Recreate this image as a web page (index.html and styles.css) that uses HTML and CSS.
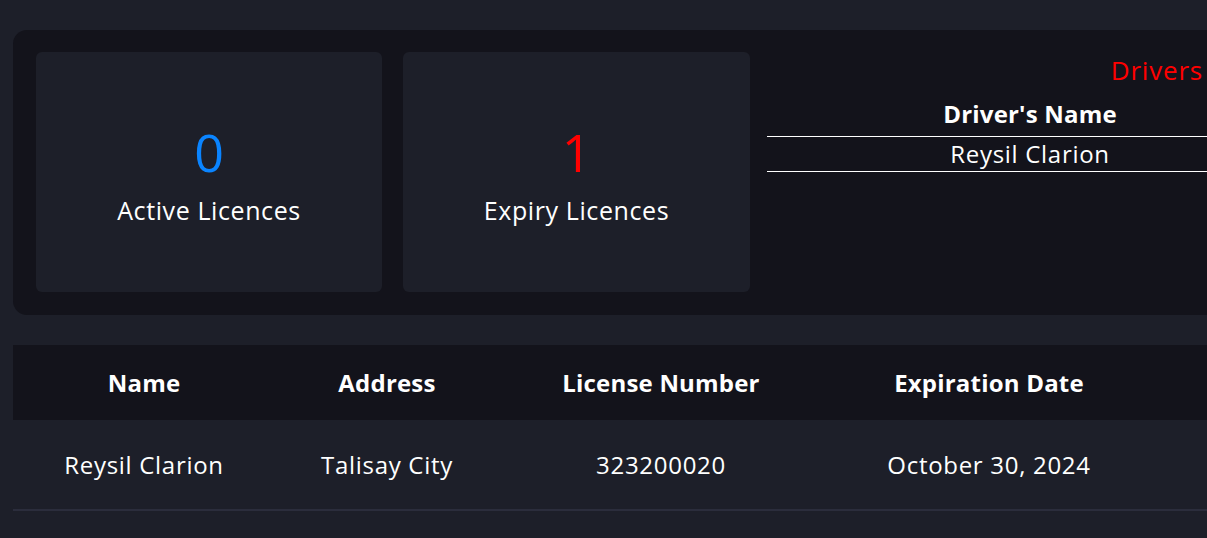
FILE: index.html
```html
<!DOCTYPE html>
<html lang="en">
<head>
<meta charset="utf-8">
<title>Licences Dashboard</title>
<link rel="stylesheet" href="styles.css">
</head>
<body>
<main class="page">
  <section class="summary">
    <div class="stat-card">
      <div class="stat-value blue">0</div>
      <div class="stat-label">Active Licences</div>
    </div>
    <div class="stat-card second">
      <div class="stat-value red">1</div>
      <div class="stat-label">Expiry Licences</div>
    </div>
    <div class="drivers">
      <h2 class="drivers-title">Drivers</h2>
      <table class="drivers-table">
        <thead><tr><th>Driver's Name</th></tr></thead>
        <tbody><tr><td>Reysil Clarion</td></tr></tbody>
      </table>
    </div>
  </section>

  <table class="licences">
    <thead>
      <tr>
        <th class="c1">Name</th>
        <th class="c2">Address</th>
        <th class="c3">License Number</th>
        <th class="c4">Expiration Date</th>
        <th class="c5"></th>
      </tr>
    </thead>
    <tbody>
      <tr>
        <td>Reysil Clarion</td>
        <td>Talisay City</td>
        <td>323200020</td>
        <td>October 30, 2024</td>
        <td></td>
      </tr>
    </tbody>
  </table>
</main>
</body>
</html>
```
FILE: styles.css
```css
html, body {
  margin: 0;
  padding: 0;
  overflow: hidden;
}
body {
  background: #1d1f29;
  color: #ffffff;
  font-family: "Open Sans", "DejaVu Sans", sans-serif;
  width: 1207px;
  height: 538px;
}
.page {
  padding: 30px 0 0 13px;
  width: 1500px;
}
.summary {
  display: flex;
  align-items: flex-start;
  background: #13131b;
  border-radius: 14px;
  padding: 22px 0 23px 23px;
  height: 240px;
  width: 1460px;
}
.stat-card {
  width: 346px;
  height: 240px;
  box-sizing: border-box;
  padding-top: 70px;
  background: #1d1f29;
  border-radius: 6px;
  margin-right: 21px;
  display: flex;
  flex-direction: column;
  align-items: center;
  flex-shrink: 0;
}
.stat-card.second {
  width: 347px;
  margin-right: 17px;
}
.stat-value {
  font-size: 52px;
  line-height: 60px;
}
.stat-value.blue { color: #0a84ff; }
.stat-value.red { color: #ff0000; }
.stat-label {
  font-size: 25px;
  line-height: 30px;
  letter-spacing: 0.6px;
  margin-top: 13px;
}
.drivers {
  width: 526px;
  flex-shrink: 0;
}
.drivers-title {
  margin: 0;
  padding: 2px 90px 0 0;
  text-align: right;
  color: #ff0000;
  font-weight: 400;
  font-size: 26px;
  line-height: 32px;
  letter-spacing: 0.8px;
}
.drivers-table {
  width: 100%;
  border-collapse: collapse;
  margin-top: 13px;
}
.drivers-table th {
  font-size: 24px;
  font-weight: 700;
  line-height: 30px;
  letter-spacing: 0.2px;
  padding: 0 0 7px;
  border-bottom: 1px solid #ffffff;
}
.drivers-table td {
  font-size: 24px;
  line-height: 30px;
  letter-spacing: 0.7px;
  padding: 2px 0 2px;
  text-align: center;
  border-bottom: 1px solid #ffffff;
}
.licences {
  margin-top: 30px;
  border-collapse: collapse;
  table-layout: fixed;
  width: 1400px;
}
.licences th {
  background: #13131b;
  height: 75px;
  font-size: 24px;
  font-weight: 700;
  letter-spacing: 0.2px;
  padding: 0;
  text-align: center;
}
.licences td {
  height: 89px;
  font-size: 24px;
  letter-spacing: 0.7px;
  padding: 0;
  text-align: center;
  border-bottom: 2px solid #2b2d3c;
}
.c1 { width: 262px; }
.c2 { width: 224px; }
.c3 { width: 324px; }
.c4 { width: 332px; }
.c5 { width: 258px; }
```
